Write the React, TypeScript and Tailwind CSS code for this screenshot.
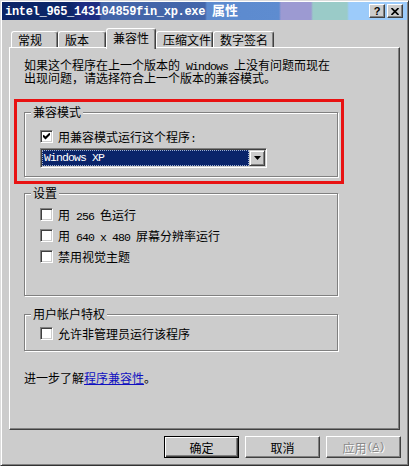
import React from "react";

const M = ({ children }: { children: React.ReactNode }) => (
  <span className="font-['Liberation_Mono',monospace] text-[11.5px] leading-[0] tracking-[-0.9px] whitespace-pre">
    {children}
  </span>
);

const CheckBox = ({ checked }: { checked?: boolean }) => (
  <span className="w-[13px] h-[13px] shrink-0 bg-white border border-t-[#808080] border-l-[#808080] border-r-white border-b-white shadow-[inset_1px_1px_0_#404040,inset_-1px_-1px_0_#cccccc] flex items-center justify-center">
    {checked && (
      <svg width="7" height="7" viewBox="0 0 7 7">
        <path d="M0 2.5 L2.5 5 L7 0.5" fill="none" stroke="#000" strokeWidth="2" />
      </svg>
    )}
  </span>
);

const Row = ({ checked, children }: { checked?: boolean; children: React.ReactNode }) => (
  <div className="flex items-center h-[13px] gap-[5px]">
    <CheckBox checked={checked} />
    <span className="whitespace-nowrap">{children}</span>
  </div>
);

const Group = ({
  title,
  className,
  children,
}: {
  title: string;
  className?: string;
  children: React.ReactNode;
}) => (
  <fieldset
    className={`w-[314px] px-[6px] border border-[#808080] shadow-[inset_1px_1px_0_#fff,1px_1px_0_#fff] ${className ?? ""}`}
  >
    <legend className="px-[2px] bg-[#cccccc] leading-[14px]">{title}</legend>
    <div className="pl-[9px]">{children}</div>
  </fieldset>
);

const Tab = ({ label, w }: { label: string; w: string }) => (
  <div
    className={`${w} h-[16px] border-t border-l border-r border-t-white border-l-white border-r-[#404040] shadow-[inset_-1px_0_0_#808080] rounded-t-[3px] flex items-center pl-[6px]`}
  >
    {label}
  </div>
);

export default function App() {
  return (
    <div className="w-[409px] h-[466px] bg-[#cccccc] border border-t-[#dcdcdc] border-l-[#dcdcdc] border-r-[#333333] border-b-[#333333] shadow-[inset_1px_1px_0_#fff,inset_-1px_-1px_0_#808080] p-[1px] flex flex-col font-['Noto_Sans_CJK_SC',sans-serif] text-[12px] leading-[13px] text-black">
      {/* title bar */}
      <div className="h-[18px] shrink-0 flex items-center pl-[3px] pr-[4px] bg-[linear-gradient(90deg,#0a2466_0px,#0c2668_68px,#1e2c82_80px,#1e2c82_97px,#4264a8_99px,#4466aa_203px,#5c8ace_205px,#5e8cd0_277px,#9c9ad2_279px,#9c9ad2_309px,#9acbc8_311px,#9acbc8_345px,#9ccbfa_347px)]">
        <span className="text-white font-bold whitespace-pre">
          <span className="font-['Liberation_Mono',monospace] text-[12px] tracking-[-0.3px]">
            intel_965_143104859fin_xp.exe{" "}
          </span>
          <span className="text-[13px]">属性</span>
        </span>
        <div className="ml-auto flex gap-[2px]">
          <div className="w-[16px] h-[14px] bg-[#cccccc] border border-t-white border-l-white border-r-[#404040] border-b-[#404040] shadow-[inset_-1px_-1px_0_#808080] flex items-center justify-center font-['Liberation_Sans',sans-serif] font-bold text-[11px] leading-none">
            ?
          </div>
          <div className="w-[16px] h-[14px] bg-[#cccccc] border border-t-white border-l-white border-r-[#404040] border-b-[#404040] shadow-[inset_-1px_-1px_0_#808080] flex items-center justify-center">
            <svg width="8" height="7" viewBox="0 0 8 7">
              <path d="M0.5 0 L7.5 7 M7.5 0 L0.5 7" stroke="#000" strokeWidth="1.6" />
            </svg>
          </div>
        </div>
      </div>

      <div className="mt-[8px] ml-[7px]">
        {/* tabs */}
        <div className="flex items-end h-[19px] pl-[2px] relative z-10">
          <Tab label="常规" w="w-[47px]" />
          <Tab label="版本" w="w-[48px]" />
          <div className="w-[50px] h-[21px] -mb-[2px] bg-[#cccccc] border-t border-l border-r border-t-white border-l-white border-r-[#404040] shadow-[inset_-1px_0_0_#808080] rounded-t-[3px] flex items-center pl-[6px] pb-[3px]">
            兼容性
          </div>
          <Tab label="压缩文件" w="w-[57px]" />
          <Tab label="数字签名" w="w-[61px]" />
        </div>

        {/* panel */}
        <div className="w-[391px] h-[383px] border border-t-white border-l-white border-r-[#404040] border-b-[#404040] shadow-[inset_-1px_-1px_0_#808080] flex flex-col">
          <div className="mt-[10px] ml-[14px] whitespace-nowrap">
            <div className="h-[13px]">
              如果这个程序在上一个版本的<M> Windows </M>上没有问题而现在
            </div>
            <div className="h-[13px]">出现问题，请选择符合上一个版本的兼容模式。</div>
          </div>

          <div className="mt-[15px] ml-[4px] w-[330px] border-[3px] border-[#e81212]">
            <Group title="兼容模式" className="mt-[3px] mb-[4px] ml-[7px] pb-[8px]">
              <div className="mt-[11px]">
                <Row checked>
                  用兼容模式运行这个程序<M>:</M>
                </Row>
              </div>
              <div className="mt-[5px] w-[227px] h-[20px] bg-white border border-t-[#808080] border-l-[#808080] border-r-white border-b-white shadow-[inset_1px_1px_0_#404040,inset_-1px_-1px_0_#cccccc] flex p-[1px]">
                <div className="flex-1 bg-[#0a246a] border border-dotted border-[#9fb0d0] flex items-center pl-[1px] text-white">
                  <M>Windows XP</M>
                </div>
                <div className="w-[16px] bg-[#cccccc] border border-t-[#cccccc] border-l-[#cccccc] border-r-[#404040] border-b-[#404040] shadow-[inset_1px_1px_0_#fff,inset_-1px_-1px_0_#808080] flex items-center justify-center">
                  <svg width="7" height="4" viewBox="0 0 7 4">
                    <path d="M0 0 H7 L3.5 4 Z" fill="#000" />
                  </svg>
                </div>
              </div>
            </Group>
          </div>

          <Group title="设置" className="mt-[2px] ml-[14px] pb-[32px]">
            <div className="flex flex-col gap-[8px] pt-[8px]">
              <Row>
                用<M> 256 </M>色运行
              </Row>
              <Row>
                用<M> 640 x 480 </M>屏幕分辨率运行
              </Row>
              <Row>禁用视觉主题</Row>
            </div>
          </Group>

          <Group title="用户帐户特权" className="mt-[11px] ml-[14px] pb-[10px]">
            <div className="pt-[6px]">
              <Row>允许非管理员运行该程序</Row>
            </div>
          </Group>

          <p className="mt-[20px] ml-[14px]">
            进一步了解<span className="text-[#1010c0] underline">程序兼容性</span>。
          </p>
        </div>
      </div>

      {/* buttons */}
      <div className="flex justify-end gap-[6px] mt-[6px] pr-[6px]">
        <button className="w-[75px] h-[22px] bg-[#cccccc] border border-black shadow-[inset_1px_1px_0_#fff,inset_-1px_-1px_0_#404040,inset_-2px_-2px_0_#808080] flex items-center justify-center">
          确定
        </button>
        <button className="w-[75px] h-[22px] bg-[#cccccc] border border-t-white border-l-white border-r-[#404040] border-b-[#404040] shadow-[inset_-1px_-1px_0_#808080] flex items-center justify-center">
          取消
        </button>
        <button className="w-[75px] h-[22px] bg-[#cccccc] border border-t-white border-l-white border-r-[#404040] border-b-[#404040] shadow-[inset_-1px_-1px_0_#808080] flex items-center justify-center text-[#8a8a8a] [text-shadow:1px_1px_0_#fff]">
          应用
          <M>
            (<span className="underline">A</span>)
          </M>
        </button>
      </div>
    </div>
  );
}
